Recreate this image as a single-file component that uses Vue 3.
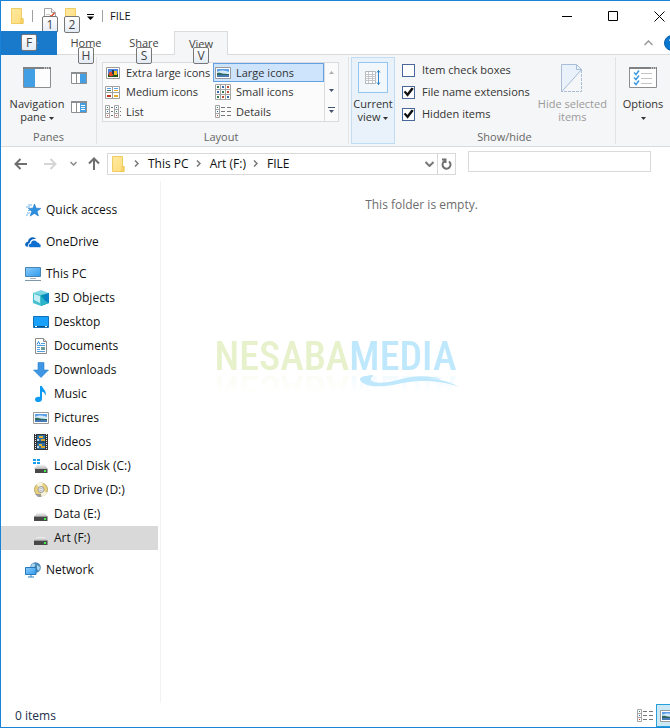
<script setup>
import { ref } from 'vue'

const tabs = [
  { label: 'Home', tip: 'H' },
  { label: 'Share', tip: 'S' },
  { label: 'View', tip: 'V' }
]
const activeTab = ref('View')

const layouts = [
  { label: 'Extra large icons', icon: 'i-xl' },
  { label: 'Large icons', icon: 'i-large' },
  { label: 'Medium icons', icon: 'i-medium' },
  { label: 'Small icons', icon: 'i-small' },
  { label: 'List', icon: 'i-list' },
  { label: 'Details', icon: 'i-details' }
]
const activeLayout = ref('Large icons')

const options = ref([
  { label: 'Item check boxes', on: false },
  { label: 'File name extensions', on: true },
  { label: 'Hidden items', on: true }
])

const crumbs = ['This PC', 'Art (F:)', 'FILE']

const tree = [
  { label: 'Quick access', icon: 'i-star' },
  { label: 'OneDrive', icon: 'i-cloud' },
  {
    label: 'This PC',
    icon: 'i-pc',
    children: [
      { label: '3D Objects', icon: 'i-cube' },
      { label: 'Desktop', icon: 'i-desktop' },
      { label: 'Documents', icon: 'i-doc' },
      { label: 'Downloads', icon: 'i-down' },
      { label: 'Music', icon: 'i-music' },
      { label: 'Pictures', icon: 'i-large' },
      { label: 'Videos', icon: 'i-video' },
      { label: 'Local Disk (C:)', icon: 'i-osdisk' },
      { label: 'CD Drive (D:)', icon: 'i-cd' },
      { label: 'Data (E:)', icon: 'i-disk' },
      { label: 'Art (F:)', icon: 'i-disk' }
    ]
  },
  { label: 'Network', icon: 'i-net' }
]
const selected = ref('Art (F:)')
</script>

<template>
  <div class="window">
    <svg class="defs" aria-hidden="true">
      <defs>
        <linearGradient id="g-screen" x1="0" y1="0" x2="1" y2="1">
          <stop offset="0" stop-color="#8ccbfa" /><stop offset="1" stop-color="#2f9bee" />
        </linearGradient>
        <linearGradient id="g-folder" x1="0" y1="0" x2="1" y2="1">
          <stop offset="0" stop-color="#ffe9a2" /><stop offset="1" stop-color="#ffdc79" />
        </linearGradient>
        <linearGradient id="g-disk" x1="0" y1="0" x2="0" y2="1">
          <stop offset="0" stop-color="#f2f2f2" /><stop offset="1" stop-color="#b5b5b5" />
        </linearGradient>
      </defs>
      <symbol id="i-folder" viewBox="0 0 16 16">
        <path d="M1.500.5h10v10h1.500v5h-11.500z" fill="url(#g-folder)" stroke="#f0cd63" />
        <path d="M11 10.500h2v5h-2z" fill="#ffe08a" stroke="#eec44f" />
      </symbol>
      <symbol id="i-page" viewBox="0 0 16 16">
        <path d="M2.500.5h7l4 4v11h-11z" fill="#fff" stroke="#a5a5a5" />
        <path d="M9.500.5v4h4" fill="#eee" stroke="#a5a5a5" />
        <path d="M7 9.500l2-2M9.500 8l3-3" fill="none" stroke="#dc4a26" stroke-width="1.500" />
        <path d="M4 6.500h4" stroke="#c9c9c9" />
      </symbol>
      <symbol id="i-xl" viewBox="0 0 16 16">
        <path d="M1.500 2.500h13v11h-13z" fill="#fff" stroke="#9a9a9a" />
        <path d="M3 4h10v8H3z" fill="#4c83dc" /><path d="M3 9h10v3H3z" fill="#27531f" />
        <circle cx="6" cy="9" r="2.300" fill="#e44b2b" /><path d="M9 6h3v4H9z" fill="#f0be22" /><path d="M7 5h2v4H7z" fill="#223a4e" />
      </symbol>
      <symbol id="i-large" viewBox="0 0 16 16">
        <path d="M.5 2.500h15v11H.5z" fill="#fff" stroke="#9a9a9a" />
        <path d="M2 4h12v8H2z" fill="#5b9fe8" />
        <path d="M2 7c3-2 7-2 12 0v2H2z" fill="#d3eafa" />
        <path d="M2 8c3-1 5 1 12 1v1H2z" fill="#2f685e" /><path d="M2 10h12v2H2z" fill="#4779b5" />
      </symbol>
      <symbol id="i-medium" viewBox="0 0 16 16">
        <path d="M.5 2.500h14v12H.5zM7.500 2v13M0 8.500h15" fill="#fff" stroke="#a0a0a0" />
        <path d="M2 4h4v1H2zM9 4h4v1H9z" fill="#5aa0e6" /><path d="M2 6h4v1H2z" fill="#397c55" />
        <path d="M9 6h4v1H9zM9 11h4v2H9z" fill="#e3ab27" /><path d="M2 11h4v2H2z" fill="#bd3722" />
      </symbol>
      <symbol id="i-small" viewBox="0 0 16 16">
        <path d="M.5.5h15v15H.5zM5.500 0v16M10.500 0v16M0 5.500h16M0 10.500h16" fill="#fff" stroke="#a5a5a5" />
        <path d="M2 2h2v2H2zM7 7h2v2H7zM2 12h2v2H2z" fill="#36784e" /><path d="M7 2h2v2H7zM2 7h2v2H2zM12 12h2v2h-2z" fill="#3669aa" />
        <path d="M12 2h2v2h-2zM12 7h2v2h-2zM7 12h2v2H7z" fill="#be4a2f" />
      </symbol>
      <symbol id="i-list" viewBox="0 0 16 16">
        <path d="M.5 1.500h4v12h-4zM9.500 1.500h4v12h-4zM0 5.500h5M0 9.500h5M9 5.500h5M9 9.500h5" fill="#fff" stroke="#a5a5a5" />
        <path d="M2 3h1v1H2zM11 7h1v1h-1z" fill="#2d865c" /><path d="M2 7h1v1H2zM11 3h1v1h-1z" fill="#286ecc" /><path d="M2 11h1v1H2zM11 11h1v1h-1z" fill="#d33820" />
        <path d="M6 3.500h2M6 7.500h2M6 11.500h2M15 3.500h1M15 7.500h1M15 11.500h1" stroke="#777" />
      </symbol>
      <symbol id="i-details" viewBox="0 0 16 16">
        <path d="M.5 1.500h4v12h-4zM0 5.500h5M0 9.500h5" fill="#fff" stroke="#a5a5a5" />
        <path d="M2 3h1v1H2z" fill="#2d865c" /><path d="M2 7h1v1H2z" fill="#286ecc" /><path d="M2 11h1v1H2z" fill="#d33820" />
        <path d="M6 3.500h4M6 7.500h4M6 11.500h4M12 3.500h4M12 7.500h4M12 11.500h4" stroke="#777" />
      </symbol>
      <symbol id="i-star" viewBox="0 0 16 16">
        <path d="M9.500 2l1.600 4.200 4.700.2-3.700 2.900 1.300 4.700-4-2.600-4.200 2.700L6.800 9.300 3.300 6.400l4.600-.2z" fill="#2d8fe0" stroke="#1a76c6" stroke-width=".6" />
        <path d="M3 3h4M1 5h4M3 8.500h2M2 11h3M1 13h2" stroke="#6fb5ee" />
      </symbol>
      <symbol id="i-cloud" viewBox="0 0 16 16">
        <path d="M1 12.500C-.8 11 .2 8 3 7.700 3.200 3.500 8.500 1.600 11 5c-4-.5-6 1.500-6.300 4C2.800 9.500 2.400 12 3.500 12.500z" fill="#0b65c2" />
        <path d="M5.500 13.500c-3-.6-2.500-4 .2-4C6 5.600 11 5 12.300 8.200c2-.2 2.200 1.300 2.200 1.800 2.200.4 1.800 3.500 0 3.500z" fill="#0f6fd0" stroke="#fff" stroke-width=".6" />
      </symbol>
      <symbol id="i-pc" viewBox="0 0 16 16">
        <path d="M.5 1.500h15v9H.5z" fill="url(#g-screen)" stroke="#4786b2" />
        <path d="M5 12.500h6" stroke="#a6b3bc" /><path d="M0 14.500h16" stroke="#7f97a6" />
      </symbol>
      <symbol id="i-cube" viewBox="0 0 16 16">
        <path d="M0 3l8-3 8 3-8 3z" fill="#7ed6e2" /><path d="M0 3l8 2v11l-8-3z" fill="#46c0d0" />
        <path d="M16 3L8 5v11l8-3z" fill="#079aaf" /><path d="M1 4l6 2v7l-6-3z" fill="#c4eef3" /><path d="M8 7l8 6-8 3z" fill="#2bb3c8" /><path d="M11 5l5-2v10l-5-3z" fill="#0b83c6" />
      </symbol>
      <symbol id="i-desktop" viewBox="0 0 16 16">
        <path d="M.5 2.500h15v11H.5z" fill="#18a0fb" stroke="#1272b8" /><path d="M1 12.500h14" stroke="#0b4f86" />
        <path d="M2 12.500h2M12 12.500h2" stroke="#fff" />
      </symbol>
      <symbol id="i-doc" viewBox="0 0 16 16">
        <path d="M2.500.5h8l3 3v12h-11z" fill="#fff" stroke="#8c8c8c" /><path d="M10.500.5v3h3" fill="#ddd" stroke="#8c8c8c" />
        <path d="M8 5.500h4M4 7.500h8M4 9.500h3M4 11.500h3M4 13.500h8" stroke="#4f9fdc" /><path d="M4 6.500l1.500-3 1.500 3" fill="none" stroke="#2987d8" />
        <path d="M8 9h4v3H8z" fill="#6d9b96" />
      </symbol>
      <symbol id="i-down" viewBox="0 0 16 16">
        <path d="M5 0.500h6V8h4.500L8 15.500.5 8H5z" fill="#3e96e4" stroke="#2a7fca" stroke-width=".6" />
      </symbol>
      <symbol id="i-music" viewBox="0 0 16 16">
        <path d="M7 0h2c.5 3 5 4.500 3.500 9.500C12 7 10.500 6 9 5.700V13c0 4-7 4-7 .5C2 11.300 4.500 10.400 7 11z" fill="#0c9bf0" />
      </symbol>
      <symbol id="i-video" viewBox="0 0 16 16">
        <path d="M1 0h14v16H1z" fill="#343434" /><path d="M4 1h8v14H4z" fill="#2f6fa8" />
        <path d="M6 2h4v2H6zM6 10h3v2H6z" fill="#e2b534" /><path d="M8 12h4v2H8zM8 5h4v2H8z" fill="#d7a52c" /><path d="M4 5h2v2H4zM4 12h2v2H4z" fill="#b7d9ec" /><path d="M4 8h8" stroke="#132637" />
        <path d="M2.500 0v16M13.500 0v16" stroke="#eee" stroke-dasharray="1 1" />
      </symbol>
      <symbol id="i-disk" viewBox="0 0 16 16">
        <path d="M4 7h8l3 4H1z" fill="url(#g-disk)" /><path d="M1 10.500h13.500V15H1z" fill="#484848" /><path d="M1 10.500h13.500" stroke="#999" /><path d="M11 12h2v2h-2z" fill="#3df04b" />
      </symbol>
      <symbol id="i-osdisk" viewBox="0 0 16 16">
        <path d="M4 7h8l3 4H1z" fill="url(#g-disk)" /><path d="M2 11h12.500v4H2z" fill="#484848" /><path d="M11 12h2v2h-2z" fill="#3df04b" />
        <path d="M0 1h3v2H0zM4 1h3v2H4zM0 4h3v2H0zM4 4h3v2H4z" fill="#14a0ea" />
      </symbol>
      <symbol id="i-cd" viewBox="0 0 16 16">
        <circle cx="8" cy="7.500" r="6.500" fill="#ead27a" stroke="#b7a56a" /><path d="M8 7.500L3 2c2-2 6-2 7-1zM8 7.500l6 3c-1 3-4 4-6 3z" fill="#f7f3dc" />
        <circle cx="8" cy="7.500" r="3" fill="#e8e8ea" stroke="#9b9b9b" /><circle cx="8" cy="7.500" r="1.200" fill="#fff" stroke="#999" stroke-width=".6" />
        <path d="M2 12h6v3H5z" fill="#9b9b9b" />
      </symbol>
      <symbol id="i-net" viewBox="0 0 16 16">
        <circle cx="10.500" cy="5.500" r="5.300" fill="#4c88b5" /><path d="M7 2c2-1 4 0 3 2S7 5 6 5zM12 3l3 2-1 4-2-2z" fill="#a8d4ee" />
        <path d="M.5 5.500h10.500v7H.5z" fill="url(#g-screen)" stroke="#2678b8" /><path d="M3 15h6M6 13v2" stroke="#2d84c4" />
      </symbol>
      <symbol id="i-caret" viewBox="0 0 5 3"><path d="M0 0h5L2.500 3z" fill="currentColor" /></symbol>
      <symbol id="i-chevron" viewBox="0 0 5 7"><path d="M1 .5l3 3-3 3" fill="none" stroke="currentColor" stroke-width="1.500" /></symbol>
    </svg>

    <header class="titlebar">
      <svg class="ico"><use href="#i-folder" /></svg>
      <span class="bar"></span>
      <button class="quick" aria-label="Properties"><svg class="ico"><use href="#i-page" /></svg><kbd class="tip">1</kbd></button>
      <button class="quick" aria-label="New folder"><svg class="ico"><use href="#i-folder" /></svg><kbd class="tip">2</kbd></button>
      <button class="more" aria-label="Customize toolbar">
        <svg width="7" height="6" viewBox="0 0 7 6"><path d="M0 .5h7" stroke="#000" /><path d="M0 2.500h7L3.500 6z" /></svg>
      </button>
      <span class="bar last"></span>
      <h1>FILE</h1>
      <div class="controls">
        <button aria-label="Minimize"><svg width="11" height="11"><path d="M0 5.500h10" stroke="#000" /></svg></button>
        <button aria-label="Maximize"><svg width="11" height="11"><path d="M.5.5h9v9h-9z" fill="none" stroke="#000" /></svg></button>
        <button aria-label="Close"><svg width="11" height="11"><path d="M.5.5l10 10M10.500.5l-10 10" stroke="#000" /></svg></button>
      </div>
    </header>

    <nav class="tabs">
      <button class="file">File<kbd class="tip">F</kbd></button>
      <button v-for="t in tabs" :key="t.label" class="tab" :class="{ active: activeTab === t.label }" @click="activeTab = t.label">
        {{ t.label }}<kbd class="tip">{{ t.tip }}</kbd>
      </button>
      <div class="tabs-end">
        <button aria-label="Collapse ribbon"><svg width="9" height="6"><path d="M.5 5l4-4 4 4" fill="none" stroke="#9a9a9a" stroke-width="1.500" /></svg></button>
        <button aria-label="Help">
          <svg width="16" height="16"><circle cx="8" cy="8" r="7.500" fill="#0b78d0" stroke="#0a5ea8" /><path d="M6 6c0-3 4-3 4-.5C10 7 8 7.500 8 9.500M8 11v1.500" fill="none" stroke="#fff" stroke-width="1.500" /></svg>
        </button>
      </div>
    </nav>

    <section class="ribbon">
      <div class="group panes">
        <div class="group-body">
          <button class="big nav-btn">
            <svg width="28" height="22"><path d="M.5.5h27v20H.5z" fill="#fdfdfd" stroke="#8c8f92" /><path d="M0 1h28" stroke="#7f8285" stroke-width="2" /><path d="M1 2h11v18H1z" fill="#429fe3" /><path d="M21 1h1M23 1h1M25 1h1" stroke="#fff" /></svg>
            <span>Navigation<br />pane <svg class="caret"><use href="#i-caret" /></svg></span>
          </button>
          <div class="pane-btns">
            <button aria-label="Preview pane"><svg width="16" height="12"><path d="M.5.5h15v11H.5zM5.500 1v11" fill="#fff" stroke="#8c8f92" /><path d="M0 1h16" stroke="#8c8f92" stroke-width="2" /><path d="M9 2h6v9H9z" fill="#429fe3" /></svg></button>
            <button aria-label="Details pane"><svg width="16" height="12"><path d="M.5.500h15v11H.5zM5.500 1v11" fill="#fff" stroke="#8c8f92" /><path d="M0 1h16" stroke="#8c8f92" stroke-width="2" /><path d="M9 2h6v9H9z" fill="#429fe3" /><path d="M10 4.500h4M10 6.500h4M10 8.500h4" stroke="#fff" /></svg></button>
          </div>
        </div>
        <h2>Panes</h2>
      </div>

      <div class="group layout">
        <div class="group-body">
          <div class="gallery">
            <div class="gallery-grid">
              <button v-for="l in layouts" :key="l.label" :class="{ on: activeLayout === l.label }" @click="activeLayout = l.label">
                <svg class="ico"><use :href="'#' + l.icon" /></svg>{{ l.label }}
              </button>
            </div>
            <div class="gallery-scroll">
              <button aria-label="Scroll up" disabled><svg class="caret up"><use href="#i-caret" /></svg></button>
              <button aria-label="Scroll down"><svg class="caret"><use href="#i-caret" /></svg></button>
              <button aria-label="More layouts"><svg width="7" height="6" viewBox="0 0 7 6"><path d="M0 .5h7" stroke="currentColor" /><path d="M1 3h5L3.500 6z" fill="currentColor" /></svg></button>
            </div>
          </div>
        </div>
        <h2>Layout</h2>
      </div>

      <button class="big current">
        <span class="frame">
          <svg width="16" height="18"><path d="M.5 2.500h10v12H.5z" fill="#fff" stroke="#b3b7ba" /><path d="M0 5.500h11M0 7.500h11M0 9.500h11M0 11.500h11M3.500 3v11M7.500 3v11" stroke="#c3c7ca" /><path d="M13.500 1v15M12 3.500l1.500-2 1.500 2M12 13.500l1.500 2 1.500-2" fill="none" stroke="#2f83c8" /></svg>
        </span>
        <span>Current<br />view <svg class="caret"><use href="#i-caret" /></svg></span>
      </button>

      <div class="group show">
        <div class="group-body">
          <div class="checks">
            <label v-for="o in options" :key="o.label"><input v-model="o.on" type="checkbox" />{{ o.label }}</label>
          </div>
          <button class="big hide" disabled>
            <svg width="22" height="29"><path d="M.5.5h15l5 5V8L.5 28z" fill="#e9f1fb" /><path d="M.5 28V.5h15l5 5L.5 28M15.500.5v5h5" fill="none" stroke="#a9bdd6" /><path d="M20.500 6v21.500H1" fill="none" stroke="#a9bdd6" stroke-dasharray="3 1" /></svg>
            <span>Hide selected<br />items</span>
          </button>
        </div>
        <h2>Show/hide</h2>
      </div>

      <div class="group opts">
        <button class="big">
          <svg width="28" height="22"><path d="M.5.5h27v20H.5z" fill="#fff" stroke="#8c8f92" /><path d="M0 1h28" stroke="#7f8285" stroke-width="2" /><path d="M22 1h1M24 1h1M26 1h1" stroke="#fff" /><path d="M12 6.500h11M12 11.500h11M12 16.500h11" stroke="#c2c4c6" /><path d="M5 5.500l2 2 3-4M5 10.500l2 2 3-4M5 15.500l2 2 3-4" fill="none" stroke="#3d9be0" stroke-width="1.500" /></svg>
          <span>Options<br /><svg class="caret"><use href="#i-caret" /></svg></span>
        </button>
      </div>
    </section>

    <div class="address">
      <button aria-label="Back"><svg width="13" height="12"><path d="M6.500 1L1.500 6l5 5M1.500 6H13" fill="none" stroke="#6f6f6f" stroke-width="2" /></svg></button>
      <button class="fwd" aria-label="Forward"><svg width="13" height="12"><path d="M6.500 1l5 5-5 5M11.500 6H0" fill="none" stroke="#d5d5d5" stroke-width="2" /></svg></button>
      <button class="recent" aria-label="Recent locations"><svg width="7" height="5"><path d="M.5 1l3 3 3-3" fill="none" stroke="#8a8a8a" stroke-width="1.500" /></svg></button>
      <button aria-label="Up"><svg width="12" height="13"><path d="M1 6.500l5-5 5 5M6 1.500V13" fill="none" stroke="#6f6f6f" stroke-width="2" /></svg></button>
      <div class="path">
        <svg class="ico"><use href="#i-folder" /></svg>
        <template v-for="c in crumbs" :key="c">
          <svg class="chev"><use href="#i-chevron" /></svg>
          <a href="#">{{ c }}</a>
        </template>
        <button class="drop" aria-label="Previous locations"><svg width="9" height="6"><path d="M.5 1l4 4 4-4" fill="none" stroke="#777" stroke-width="2" /></svg></button>
        <button class="reload" aria-label="Refresh"><svg width="11" height="12"><path d="M8 3.500A4 4 0 1 1 3.500 3.200M1 1.500h3.500V5" fill="none" stroke="#6f6f6f" stroke-width="2" /></svg></button>
      </div>
      <input type="text" class="search" aria-label="Search FILE" />
    </div>

    <div class="main">
      <aside>
        <ul>
          <li v-for="n in tree" :key="n.label">
            <button :class="{ sel: selected === n.label }" @click="selected = n.label"><svg class="ico"><use :href="'#' + n.icon" /></svg>{{ n.label }}</button>
            <ul v-if="n.children" class="sub">
              <li v-for="c in n.children" :key="c.label">
                <button :class="{ sel: selected === c.label }" @click="selected = c.label"><svg class="ico"><use :href="'#' + c.icon" /></svg>{{ c.label }}</button>
              </li>
            </ul>
          </li>
        </ul>
      </aside>
      <main>
        <p>This folder is empty.</p>
      </main>
    </div>

    <div class="brand">
      <div class="word"><span class="nes">NESABA</span><span class="med">MEDIA</span></div>
      <svg class="swoosh" width="100" height="14" viewBox="0 0 100 14"><path d="M14 0C5 1 0 2 1 5c3 6 16 8 33 5 18-4 38-7 66 2C78 0 52 2 34 6 22 9 10 8 12 3c1-1 2-2 2-3z" fill="#bfe8fd" /><path d="M36 6C52 0 68 0 84 4 68 3 52 4 38 8z" fill="#bfe8fd" /></svg>
    </div>

    <footer>
      <span>0 items</span>
      <div class="views">
        <button aria-label="Details view"><svg class="ico"><use href="#i-details" /></svg></button>
        <button class="on" aria-label="Large icons view"><svg class="ico"><use href="#i-large" /></svg></button>
      </div>
    </footer>
  </div>
</template>

<style>
body { margin: 0; }
</style>

<style scoped>
* { box-sizing: border-box; }
.window {
  position: relative; display: flex; flex-direction: column; min-height: 100vh; overflow: hidden;
  border: 1px solid #1883d7; border-right: 0; background: #fff;
  font: 12px/16px "Open Sans", "Noto Sans", sans-serif; color: #111;
}
.defs { position: absolute; width: 0; height: 0; }
button { margin: 0; padding: 0; border: 0; background: none; font: inherit; color: inherit; }
svg { display: block; flex: none; }
h1, h2, p, ul { margin: 0; padding: 0; font: inherit; }
ul { list-style: none; }
.ico { width: 16px; height: 16px; }
.caret { display: inline-block; width: 5px; height: 3px; vertical-align: middle; }
.caret.up { transform: rotate(180deg); }

.tip {
  position: absolute; width: 16px; height: 17px; border: 1px solid #777; border-radius: 2px;
  background: linear-gradient(#fff, #e4ebf5); font: 12px/15px "Open Sans", "Noto Sans", sans-serif; color: #444; text-align: center;
}
.titlebar { display: flex; align-items: center; height: 30px; padding-left: 9px; }
.bar { width: 1px; height: 12px; margin: 0 9px 0 6px; background: #a0a0a0; }
.bar.last { margin-right: 7px; }
.quick { position: relative; margin-right: 6px; }
.quick .tip { top: 8px; left: 0; }
.more { margin: 2px 2px 0 1px; }
h1 { font-size: 11px; }
.controls { display: flex; align-self: stretch; margin: 0 -12px 0 auto; }
.controls button { display: flex; justify-content: center; align-items: center; width: 46px; }

.tabs { display: flex; height: 24px; border-bottom: 1px solid #dadbdc; font-size: 11px; color: #444; }
.tabs > button { position: relative; height: 24px; }
.file { width: 56px; background: #1979ca; color: #cfe3f5; }
.file .tip { top: 3px; left: 20px; }
.tab { width: 58px; }
.tab .tip { top: 16px; left: 21px; z-index: 1; }
.tab.active { width: 54px; margin-left: 1px; border: 1px solid #dadbdc; border-bottom: 0; background: #f5f6f7; }
.tab.active .tip { left: 18px; top: 15px; }
.tabs-end { display: flex; align-items: center; gap: 11px; margin: 0 -10px 0 auto; }

.ribbon { display: flex; height: 92px; padding-top: 2px; border-bottom: 1px solid #dadbdc; background: #f5f6f7; font-size: 11px; color: #444; }
.group { display: flex; flex-direction: column; height: 87px; border-right: 1px solid #e2e3e4; }
.group-body { display: flex; flex: 1; }
h2 { height: 15px; text-align: center; color: #666; }
.big { display: flex; flex-direction: column; align-items: center; line-height: 13px; text-align: center; color: #333; }
.panes { width: 96px; }
.nav-btn { width: 68px; padding: 10px 0 0 4px; gap: 8px; }
.pane-btns { display: flex; flex-direction: column; gap: 17px; padding: 15px 0 0 2px; }
.layout { width: 252px; padding-left: 5px; }
.layout h2 { padding-right: 8px; }
.gallery { display: flex; width: 237px; height: 60px; margin-top: 5px; border: 1px solid #dadbdc; background: #fbfbfc; }
.gallery-grid { display: grid; grid-template-columns: 110px 111px; grid-template-rows: 19px 20px 19px; }
.gallery-grid button { display: flex; align-items: center; gap: 5px; padding-left: 1px; white-space: nowrap; border: 1px solid transparent; color: #333; }
.gallery-grid .on { border-color: #62a2e4; background: #cde4fc; }
.gallery-scroll { flex: 1; display: grid; border-left: 1px solid #dadbdc; color: #44546e; }
.gallery-scroll button { display: flex; justify-content: center; align-items: center; }
.gallery-scroll button:disabled { color: #b0b0b0; }
.current { width: 44px; height: 87px; margin-left: 2px; padding-top: 4px; gap: 4px; border: 1px solid #c0dcf3; background: #e9f2fa; }
.frame { display: flex; justify-content: center; align-items: center; width: 30px; height: 31px; border: 1px solid #92c6f2; background: #f2f7fc; }
.show { flex: 1; padding-left: 7px; }
.show h2 { padding-right: 8px; }
.checks { display: flex; flex-direction: column; gap: 6px; padding-top: 5px; color: #333; }
.checks label { display: flex; align-items: center; gap: 7px; white-space: nowrap; }
input[type="checkbox"] { appearance: none; width: 13px; height: 13px; margin: 0; border: 1px solid #4a679c; background: #fff; }
input[type="checkbox"]:checked::before {
  content: ""; display: block; width: 11px; height: 11px; background: #111;
  clip-path: polygon(6% 50%, 22% 38%, 40% 58%, 78% 8%, 98% 20%, 42% 94%);
}
.hide { margin: 7px auto 0; gap: 4px; color: #9a9a9a; white-space: nowrap; }
.opts { width: 54px; border: 0; }
.opts .big { padding-top: 10px; gap: 8px; }

.address { display: flex; align-items: center; padding: 0 19px 1px 13px; height: 34px; }
.fwd { margin-left: 17px; }
.recent { margin: 0 11px 0 13px; }
.path { display: flex; align-items: center; flex: 1; height: 22px; margin: 0 12px 0 7px; padding-left: 3px; border: 1px solid #d9d9d9; }
.path a { color: #111; text-decoration: none; white-space: nowrap; }
.chev { width: 5px; height: 7px; margin: 0 9px 0 7px; color: #777; }
.drop { margin: 0 3px 0 auto; }
.reload { display: flex; align-items: center; align-self: stretch; padding: 0 3px; border-left: 1px solid #d9d9d9; }
.search { width: 183px; height: 21px; margin-bottom: 4px; border: 1px solid #d9d9d9; font: inherit; }

.main { display: flex; flex: 1; }
aside { width: 160px; padding: 17px 2px 0 0; border-right: 1px solid #f2f2f2; }
aside button { display: flex; align-items: center; gap: 5px; width: 100%; height: 24px; padding-left: 24px; white-space: nowrap; }
aside > ul > li { margin-bottom: 8px; }
.sub button { padding-left: 32px; }
.sel { background: #d9d9d9; }
main { flex: 1; padding: 16px 0 0 12px; text-align: center; }
main p { color: #6d6d6d; }

/* Watermark over the middle of the window */
.brand { position: absolute; top: 50%; left: 50%; transform: translate(-50%, -66%); pointer-events: none; }
.word {
  font: 500 40px/44px "Roboto Condensed", "Open Sans Condensed", sans-serif; white-space: nowrap;
  -webkit-box-reflect: below -12px linear-gradient(transparent 40%, rgba(0, 0, 0, .3));
}
.nes { color: #e7f1cc; }
.med { color: #bfe8fd; }
.swoosh { position: absolute; right: -3px; top: 40px; }

footer { display: flex; align-items: center; justify-content: space-between; height: 24px; padding: 1px 0 0 14px; color: #22304e; }
.views { display: flex; align-items: center; gap: 1px; margin-right: -10px; }
.views button { display: flex; justify-content: center; align-items: center; width: 20px; height: 23px; }
.views .on { width: 24px; border: 1px solid #26a0da; background: #cce8f5; }
</style>
